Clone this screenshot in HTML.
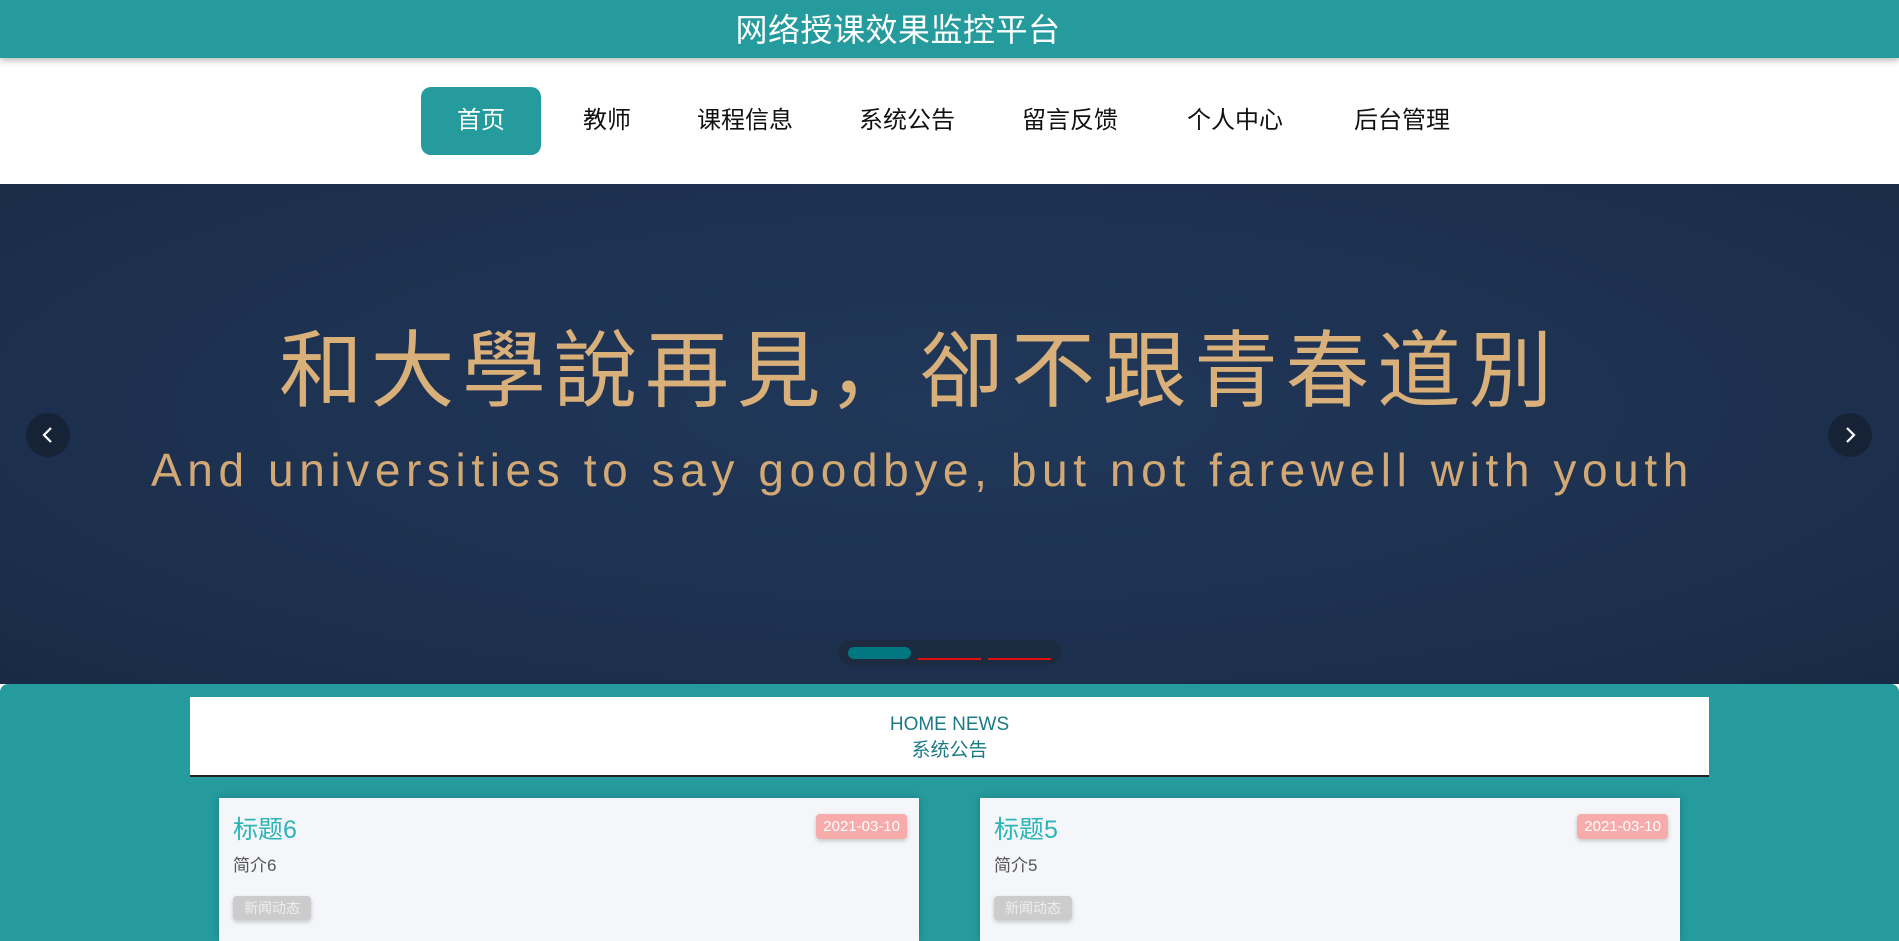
<!DOCTYPE html>
<html><head><meta charset="utf-8"><style>
*{margin:0;padding:0;box-sizing:border-box}
body{width:1899px;height:941px;overflow:hidden;background:#fff;font-family:"Liberation Sans","Noto Sans CJK SC",sans-serif;position:relative}
.hd{position:absolute;left:0;top:0;width:1899px;height:58px;background:#259b9d;box-shadow:0 3px 6px rgba(0,0,0,.25);z-index:2}
.hd span{position:absolute;left:898px;top:28px;transform:translate(-50%,-50%);color:#fff;font-size:32px;font-weight:normal;letter-spacing:0.5px;white-space:nowrap}
.nav{position:absolute;top:87px;height:68px;font-size:24px;color:#111;line-height:68px;transform:translateX(-50%);white-space:nowrap}
.nav.on{background:#259b9d;color:#fff;width:120px;text-align:center;border-radius:10px}
.bn{position:absolute;left:0;top:184px;width:1899px;height:500px;background:radial-gradient(ellipse at 50% 45%,#21385a,#1c2f4d 70%,#192a45)}
.cn{position:absolute;left:279px;width:1300px;font-size:84px;color:#d9b07a;letter-spacing:7.5px;white-space:nowrap;line-height:100px}
.en{position:absolute;left:151px;width:1560px;font-size:46px;color:#d2a874;white-space:nowrap;letter-spacing:5.6px;line-height:56px}
.ar{position:absolute;width:44px;height:44px;border-radius:50%;background:rgba(20,30,45,.7)}
.ar svg{position:absolute;left:12px;top:12px}
.pill{position:absolute;left:838px;top:640px;width:223px;height:25px;border-radius:12px;background:#1c2b40}
.sec{position:absolute;left:0;top:684px;width:1899px;height:257px;background:#259b9d;border-radius:8px 8px 0 0}
.box{position:absolute;left:190px;top:697px;width:1519px;height:80px;background:#fff;border-bottom:2px solid #222;text-align:center;color:#1b7a85}
.card{position:absolute;top:798px;width:700px;height:143px;background:#f4f6f9;box-shadow:0 0 8px rgba(0,0,0,.2)}
.t{position:absolute;left:14px;top:12px;font-size:25px;color:#2cb5b8}
.d{position:absolute;right:12px;top:16px;background:#f7abab;color:#fff;font-size:15px;padding:4px 7px;border-radius:4px;box-shadow:0 2px 5px rgba(0,0,0,.2)}
.s{position:absolute;left:14px;top:53px;font-size:17px;color:#555}
.g{position:absolute;left:14px;top:98px;background:#ccc;color:#eee;font-size:14px;padding:2px 11px;border-radius:4px;box-shadow:0 2px 5px rgba(0,0,0,.2)}
</style></head><body>
<div class="hd"><span>网络授课效果监控平台</span></div>
<div class="nav on" style="left:481px">首页</div>
<div class="nav" style="left:607px">教师</div>
<div class="nav" style="left:745px">课程信息</div>
<div class="nav" style="left:907px">系统公告</div>
<div class="nav" style="left:1070px">留言反馈</div>
<div class="nav" style="left:1235px">个人中心</div>
<div class="nav" style="left:1402px">后台管理</div>
<div class="bn">
<div class="cn" style="top:137px">和大學說再見，卻不跟青春道別</div>
<div class="en" style="top:258px">And universities to say goodbye, but not farewell with youth</div>
<div class="ar" style="left:26px;top:229px"><svg width="20" height="20" viewBox="0 0 20 20"><path d="M13 3 L6 10 L13 17" stroke="#fff" stroke-width="2.2" fill="none"/></svg></div>
<div class="ar" style="left:1828px;top:229px"><svg width="20" height="20" viewBox="0 0 20 20"><path d="M7 3 L14 10 L7 17" stroke="#fff" stroke-width="2.2" fill="none"/></svg></div>
</div>
<div class="pill"></div>
<div style="position:absolute;left:848px;top:647px;width:63px;height:12px;border-radius:6px;background:#007780"></div>
<div style="position:absolute;left:918px;top:658px;width:63px;height:2px;background:#e01010"></div>
<div style="position:absolute;left:988px;top:658px;width:63px;height:2px;background:#e01010"></div>
<div class="sec"></div>
<div class="box"><div style="font-size:19px;margin-top:16px;line-height:24px">HOME NEWS</div><div style="font-size:19px;line-height:28px">系统公告</div></div>
<div class="card" style="left:219px"><div class="t">标题6</div><div class="d">2021-03-10</div><div class="s">简介6</div><div class="g">新闻动态</div></div>
<div class="card" style="left:980px"><div class="t">标题5</div><div class="d">2021-03-10</div><div class="s">简介5</div><div class="g">新闻动态</div></div>
</body></html>
